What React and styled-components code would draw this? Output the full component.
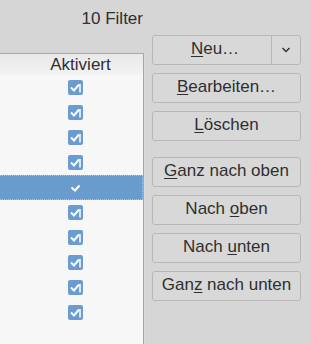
import React from 'react';
import styled, { createGlobalStyle } from 'styled-components';

const Global = createGlobalStyle`
   html, body {
      margin: 0;
      padding: 0;
      background: #d6d6d6;
   }
   body {
      font-family: "Liberation Sans", Arial, sans-serif;
      font-size: 17px;
      color: #2f2f2f;
   }
`;

const Page = styled.div`
   width: 311px;
   height: 344px;
   display: flex;
   flex-flow: row nowrap;
   overflow: hidden;
`;

const LeftColumn = styled.div`
   width: 144px;
   display: flex;
   flex-direction: column;
`;

const Title = styled.div`
   height: 53px;
   box-sizing: border-box;
   padding-top: 9px;
   padding-right: 1px;
   line-height: 20px;
   text-align: right;
`;

const Table = styled.div`
   flex: 1;
   background: #f7f7f7;
   border-top: 1px solid #a9a9a9;
   border-right: 1px solid #a6a6a6;
   box-shadow: 1px 0 0 #dcdcdc;
`;

const Header = styled.div`
   height: 21px;
   line-height: 21px;
   padding-left: 18px;
   text-align: center;
   background: linear-gradient(#e9e9e9, #f2f2f2);
`;

const Row = styled.div`
   height: 25px;
   box-sizing: border-box;
   padding-left: 8px;
   display: flex;
   align-items: center;
   justify-content: center;
   background: ${p => (p.$selected ? '#6a9bcd' : 'transparent')};
   border: 1px dotted ${p => (p.$selected ? '#c8c86a' : 'transparent')};
   border-left: none;
`;

const Box = styled.span`
   width: 15px;
   height: 15px;
   margin-top: -1px;
   border-radius: 2px;
   background: #6a9bd1;
   display: flex;
`;

const ButtonColumn = styled.div`
   width: 149px;
   margin-left: 8px;
   padding-top: 35px;
   display: flex;
   flex-direction: column;
   gap: 8px;
`;

const Button = styled.div`
   height: 30px;
   box-sizing: border-box;
   border: 1px solid #b7b7b7;
   border-radius: 3px;
   background: #d8d8d8;
   display: flex;
   align-items: center;
   justify-content: center;
   padding-bottom: 3px;
   line-height: 20px;
   white-space: pre;
   margin-top: ${p => (p.$groupStart ? '8px' : '0')};
`;

const SplitButton = styled.div`
   height: 30px;
   box-sizing: border-box;
   border: 1px solid #b7b7b7;
   border-radius: 3px;
   background: #d8d8d8;
   display: flex;
`;

const SplitMain = styled.div`
   flex: 1;
   display: flex;
   align-items: center;
   justify-content: center;
   padding-bottom: 3px;
   padding-left: 6px;
   line-height: 20px;
   border-right: 1px solid #b7b7b7;
`;

const SplitArrow = styled.div`
   width: 28px;
   display: flex;
   align-items: center;
   justify-content: center;
   padding-bottom: 1px;
`;

const Label = styled.span`
   white-space: pre;
`;

const Key = styled.span`
   text-decoration: underline;
   text-underline-offset: 2px;
`;

const CheckBox = () =>
   <Box>
      <svg width="15" height="15" viewBox="0 0 15 15">
         <path d="M3 7.5 L6 10.5 L11 4.5" fill="none" stroke="#fff" strokeWidth="2" />
         <path d="M12 4 L12 12.5" fill="none" stroke="#fff" strokeWidth="1.5" />
      </svg>
   </Box>

const SmallCheck = () =>
   <svg width="11" height="8" viewBox="0 0 11 8">
      <path d="M1.5 3.5 L5 6.5 L9.5 1.5" fill="none" stroke="#fff" strokeWidth="2" />
   </svg>

const rows = [0, 1, 2, 3, 4, 5, 6, 7, 8, 9];

const App = () =>
   <Page>
      <Global />
      <LeftColumn>
         <Title>10 Filter</Title>
         <Table>
            <Header>Aktiviert</Header>
            {rows.map(i =>
               <Row key={i} $selected={i === 4}>
                  {i === 4 ? <SmallCheck /> : <CheckBox />}
               </Row>
            )}
         </Table>
      </LeftColumn>
      <ButtonColumn>
         <SplitButton>
            <SplitMain><Label><Key>N</Key>eu…</Label></SplitMain>
            <SplitArrow>
               <svg width="10" height="6" viewBox="0 0 10 6">
                  <path d="M1.5 1 L5 4.5 L8.5 1" fill="none" stroke="#333" strokeWidth="1.5" />
               </svg>
            </SplitArrow>
         </SplitButton>
         <Button><Label><Key>B</Key>earbeiten…</Label></Button>
         <Button><Label><Key>L</Key>öschen</Label></Button>
         <Button $groupStart><Label><Key>G</Key>anz nach oben</Label></Button>
         <Button><Label>Nach <Key>o</Key>ben</Label></Button>
         <Button><Label>Nach <Key>u</Key>nten</Label></Button>
         <Button><Label>Gan<Key>z</Key> nach unten</Label></Button>
      </ButtonColumn>
   </Page>

export default App;
